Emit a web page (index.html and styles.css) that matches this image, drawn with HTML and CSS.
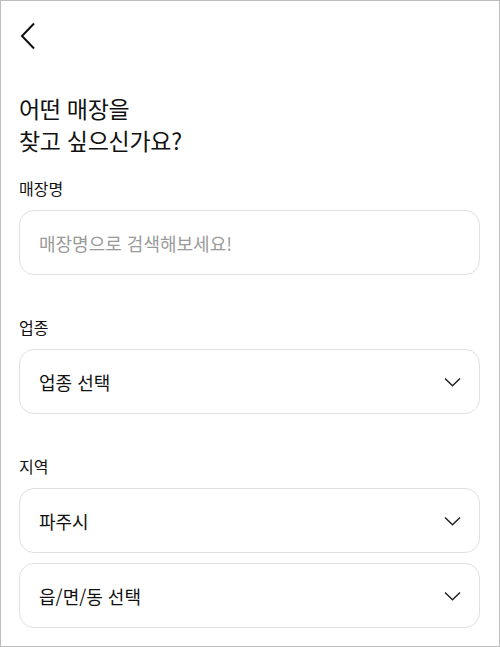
FILE: index.html
```html
<!DOCTYPE html>
<html lang="ko">
<head>
<meta charset="utf-8">
<link rel="stylesheet" href="styles.css">
</head>
<body>
<div class="frame">
  <div class="header">
    <svg class="back" width="16" height="28" viewBox="0 0 16 28"><path d="M14 1.5 L2 14 L14 26.5" fill="none" stroke="#111" stroke-width="2"/></svg>
  </div>
  <h1 class="title">어떤 매장을<br>찾고 싶으신가요?</h1>
  <section class="field">
    <div class="label">매장명</div>
    <div class="box"><span class="placeholder">매장명으로 검색해보세요!</span></div>
  </section>
  <section class="field">
    <div class="label">업종</div>
    <div class="box select"><span class="value">업종 선택</span><svg class="chev" width="17" height="10" viewBox="0 0 17 10"><path d="M1 1.5 L8.5 8.8 L16 1.5" fill="none" stroke="#222" stroke-width="1.5"/></svg></div>
  </section>
  <section class="field">
    <div class="label">지역</div>
    <div class="stack">
      <div class="box select"><span class="value">파주시</span><svg class="chev" width="17" height="10" viewBox="0 0 17 10"><path d="M1 1.5 L8.5 8.8 L16 1.5" fill="none" stroke="#222" stroke-width="1.5"/></svg></div>
      <div class="box select"><span class="value">읍/면/동 선택</span><svg class="chev" width="17" height="10" viewBox="0 0 17 10"><path d="M1 1.5 L8.5 8.8 L16 1.5" fill="none" stroke="#222" stroke-width="1.5"/></svg></div>
    </div>
  </section>
</div>
</body>
</html>
```

FILE: styles.css
```css
* { box-sizing: border-box; }
html, body { margin: 0; padding: 0; background: #fff; }
body { font-family: "Noto Sans CJK KR", "Noto Sans", sans-serif; color: #111; }
.frame {
  width: 500px;
  height: 647px;
  border: 1px solid #bdbdbd;
  padding: 0 19px 0 18px;
  overflow: hidden;
}
.header { height: 91px; padding-top: 21px; }
.back { display: block; margin-left: 1px; }
.title {
  margin: 0;
  font-size: 23px;
  font-weight: 400;
  line-height: 32px;
  letter-spacing: -0.3px;
  color: #111;
}
.field { display: flex; flex-direction: column; gap: 11px; margin-top: 21px; }
.field + .field { margin-top: 41px; }
.label { font-size: 16px; line-height: 22px; color: #111; }
.stack { display: flex; flex-direction: column; gap: 10px; }
.box {
  height: 65px;
  border: 1px solid #e0e0e0;
  border-radius: 15px;
  display: flex;
  align-items: center;
  padding: 0 18px 0 19px;
  font-size: 18px;
}
.placeholder { color: #9a9a9a; }
.select { justify-content: space-between; }
.value { color: #111; }
.chev { display: block; }
```
